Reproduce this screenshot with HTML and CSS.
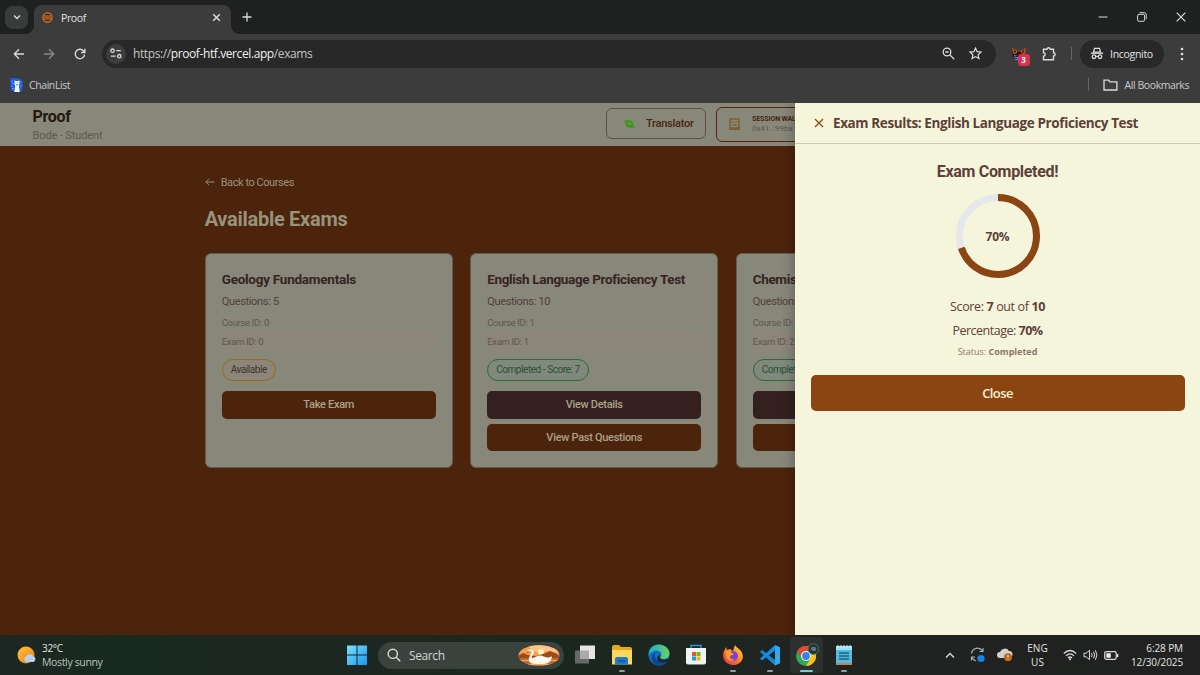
FILE: index.html
```html
<!DOCTYPE html>
<html lang="en">
<head>
<meta charset="utf-8">
<title>Proof</title>
<link rel="stylesheet" href="styles.css">
</head>
<body>
<div class="tabstrip">
  <div class="tab-search"><svg width="10" height="10" viewBox="0 0 10 10"><path d="M2 3.5 5 6.5 8 3.5" class="ln w15"/></svg></div>
  <div class="tab">
    <svg width="11" height="11" viewBox="0 0 11 11"><circle cx="5.5" cy="5.5" r="4.6" fill="#4b2a12" stroke="#d87a2c" stroke-width="1.1"/><path d="M1 4h9M1 7h9" stroke="#d87a2c"/><path d="M2 5.500h7" stroke="#a85c22"/></svg>
    <span class="tab-title">Proof</span>
    <svg class="tab-close" width="9" height="9" viewBox="0 0 9 9"><path d="M1.2 1.2 7.8 7.8M7.8 1.2 1.2 7.8" class="ln w15"/></svg>
  </div>
  <svg class="new-tab" width="10" height="10" viewBox="0 0 10 10"><path d="M5 .5v9M.5 5h9" class="ln w13"/></svg>
  <div class="win-controls">
    <svg width="10" height="10" viewBox="0 0 10 10"><path d="M.5 5h9" class="ln w1"/></svg>
    <svg width="10" height="10" viewBox="0 0 10 10"><rect x=".6" y="2.3" width="7" height="7" rx="1.5" class="ln w1"/><path d="M2.5.7h4.7a2 2 0 0 1 2 2v4.6" class="ln w1"/></svg>
    <svg width="10" height="10" viewBox="0 0 10 10"><path d="M.7.7l8.6 8.6M9.3.7.7 9.3" class="ln w12"/></svg>
  </div>
</div>

<div class="toolbar">
  <div class="nav">
    <svg width="12" height="12" viewBox="0 0 12 12"><path d="M11 6H1.5M6 1.3 1.3 6 6 10.7" class="ln w13"/></svg>
    <svg class="dim" width="12" height="12" viewBox="0 0 12 12"><path d="M1 6h9.500M6 1.300 10.700 6 6 10.700" class="ln w13"/></svg>
    <svg width="12" height="12" viewBox="0 0 12 12"><path d="M10.600 6.600A4.700 4.700 0 1 1 9.400 2.800L10.700 4.100M10.800.8v3.700H7.100" class="ln w14"/></svg>
  </div>
  <div class="omnibox">
    <span class="site-info"><svg width="12" height="11" viewBox="0 0 12 11"><circle cx="2.500" cy="2.700" r="1.700" class="ln w13"/><path d="M6.300 2.700h4.500M1 8.200h4.500" class="ln w13"/><circle cx="9.300" cy="8.200" r="1.700" class="ln w13"/></svg></span>
    <span class="url">https://<b>proof-htf.vercel.app</b>/exams</span>
    <svg class="zoomed" width="13" height="13" viewBox="0 0 13 13"><circle cx="5" cy="5" r="3.800" class="ln w13"/><path d="M3.300 5h3.400M7.900 7.900l4.300 4.300" class="ln w13"/></svg>
    <svg width="13" height="13" viewBox="0 0 13 13"><path d="M6.500 1.100 8.100 4.700 12 5.100 9.100 7.700 9.900 11.600 6.500 9.600 3.100 11.600 3.900 7.700 1 5.100 4.900 4.700Z" class="ln w12"/></svg>
  </div>
  <div class="extension">
    <svg width="16" height="14" viewBox="0 0 16 14"><path d="M1 1 6 3.500h4L15 1l-.8 5-.7 5-3 2H5.500L2 11Z" fill="#261718"/><path d="M1 .7 6 3.400h4L15 .7 14.300 6l-1.800 2-2-2H6L4 7.500 2 6Z" fill="#c4512a"/><path d="M2.500 2.500 5 4.500 4 6.500ZM13.500 2.500 11 4.500l1 2ZM6 4.500h4v2H6Z" fill="#1a1414"/><path d="M3 8l4 1v4H4Z" fill="#6c7fda"/><path d="M4 9.500h3M4 11.500h2" stroke="#1b1b34"/></svg>
    <span class="ext-badge">3</span>
  </div>
  <svg class="puzzle" width="14" height="15" viewBox="0 0 14 15"><path d="M1.500 3.300H5a1.600 1.600 0 1 1 3.200 0h3.300v3.500a1.600 1.600 0 1 1 0 3.200v3.700H1.500v-3.500a1.700 1.700 0 0 0 0-3.400Z" class="ln w14"/></svg>
  <i class="divider"></i>
  <div class="incognito">
    <svg width="14" height="13" viewBox="0 0 14 13"><path d="M4.500 1.400h5l1 3.800h-7Z" class="ln w13"/><path d="M.8 6.200h12.400" class="ln w13"/><circle cx="4" cy="9.700" r="1.800" class="ln w13"/><circle cx="10" cy="9.700" r="1.800" class="ln w13"/><path d="M5.800 9.400h2.400" class="ln w12"/></svg>
    <span>Incognito</span>
  </div>
  <svg class="kebab" width="4" height="14" viewBox="0 0 4 14"><g fill="#ddd"><circle cx="2" cy="2" r="1.300"/><circle cx="2" cy="7" r="1.300"/><circle cx="2" cy="12" r="1.300"/></g></svg>
</div>

<div class="bookmarks">
  <svg width="13" height="14" viewBox="0 0 13 14"><path d="M0 0h7l4 1 2 5-1 7H1Z" fill="#1d5bd8"/><path d="M1 3h2M2 5.500h2M1 8h2M2 10.500h2M10 4h2M10 8h2" stroke="#5b99ff"/><path d="M4.500 2l1 1h3l1-1v4.500l-.6 1.500 1 6H4.200l1-6-.7-1.500Z" fill="#e9f4ff"/><path d="M6.300 6h1.500L7 8Z" fill="#1d5bd8"/></svg>
  <span>ChainList</span>
  <i class="divider push"></i>
  <svg width="15" height="12" viewBox="0 0 15 12"><path d="M1 1.200h4.500L7 2.800h6.900v8.200H1Z" class="ln w13"/></svg>
  <span class="all">All Bookmarks</span>
</div>

<div class="page">
  <header class="app-header">
    <div class="brand"><div class="brand-name">Proof</div><div class="brand-user">Bode - Student</div></div>
    <div class="translator">
      <svg width="11" height="10" viewBox="0 0 11 10"><path d="M0 1.500 4.500.8l4 1.700L9.500 6l1.500 2.700-5 .3L2 7.500 1.400 4Z" fill="#40951a"/><path d="M3.800 3.700c1.600-.8 3.600.5 3.500 1.900-1.600.8-3.600-.5-3.500-1.900Z" fill="#87877a"/></svg>
      <span>Translator</span>
    </div>
    <div class="wallet">
      <svg width="11" height="12" viewBox="0 0 11 12"><rect x="1" y="1" width="9" height="9" fill="none" stroke="#765314" stroke-width="1.100"/><path d="M3 4h1.700M6.300 4H8M3.300 7h4.400M0 11.300h11" stroke="#765314" fill="none"/></svg>
      <div><div class="wallet-label">SESSION WALLET</div><div class="wallet-id">0x41...99ba</div></div>
    </div>
  </header>

  <main class="content">
    <div class="back"><svg width="10" height="8" viewBox="0 0 10 8"><path d="M9.500 4H.8M4 .8.800 4 4 7.200" fill="none" stroke="#99927c"/></svg><span>Back to Courses</span></div>
    <h1>Available Exams</h1>
    <div class="cards">
      <section class="card">
        <h2 class="short">Geology Fundamentals</h2>
        <p class="questions">Questions: 5</p>
        <p class="meta">Course ID: 0</p>
        <p class="meta exam">Exam ID: 0</p>
        <span class="badge open">Available</span>
        <div class="actions"><div class="btn brown">Take Exam</div></div>
      </section>
      <section class="card">
        <h2>English Language Proficiency Test</h2>
        <p class="questions">Questions: 10</p>
        <p class="meta">Course ID: 1</p>
        <p class="meta exam">Exam ID: 1</p>
        <span class="badge done">Completed - Score: 7</span>
        <div class="actions"><div class="btn dark">View Details</div><div class="btn brown">View Past Questions</div></div>
      </section>
      <section class="card">
        <h2>Chemistry Basics</h2>
        <p class="questions">Questions: 10</p>
        <p class="meta">Course ID: 2</p>
        <p class="meta exam">Exam ID: 2</p>
        <span class="badge done">Completed - Score: 7</span>
        <div class="actions"><div class="btn dark"></div><div class="btn brown"></div></div>
      </section>
    </div>
  </main>

  <aside class="drawer">
    <div class="drawer-head">
      <svg width="10" height="10" viewBox="0 0 10 10"><path d="M1 1l8 8M9 1 1 9" fill="none" stroke="#8b4513" stroke-width="1.150"/></svg>
      <span>Exam Results: English Language Proficiency Test</span>
    </div>
    <div class="drawer-body">
      <div class="completed">Exam Completed!</div>
      <div class="ring">
        <svg width="84" height="84" viewBox="0 0 84 84"><circle cx="42" cy="42" r="38.500" fill="none" stroke="#e5e7eb" stroke-width="7"/><circle cx="42" cy="42" r="38.500" fill="none" stroke="#8b4513" stroke-width="7" pathLength="100" stroke-dasharray="70 30" transform="rotate(-90 42 42)"/></svg>
        <span class="ring-value">70%</span>
      </div>
      <p class="result score">Score: <b>7</b> out of <b>10</b></p>
      <p class="result percentage">Percentage: <b>70%</b></p>
      <p class="status">Status: <b>Completed</b></p>
      <div class="close-btn"><span>Close</span></div>
    </div>
  </aside>
</div>

<footer class="taskbar">
  <div class="weather">
    <svg width="20" height="19" viewBox="0 0 20 19"><defs><linearGradient id="sun" x2="1" y2="1"><stop stop-color="#ffc53b"/><stop offset="1" stop-color="#ee7b12"/></linearGradient></defs><circle cx="9" cy="9" r="8.500" fill="url(#sun)"/><path d="M9 16a3 3 0 0 1 .3-5.500 4 4 0 0 1 7-.2A3 3 0 0 1 16.500 16Z" fill="#b9d0f3"/></svg>
    <div><div class="temp">32°C</div><div class="cond">Mostly sunny</div></div>
  </div>
  <svg class="start" width="20" height="20" viewBox="0 0 20 20"><defs><linearGradient id="win" x2="1" y2="1"><stop stop-color="#7fe0ff"/><stop offset="1" stop-color="#1597ee"/></linearGradient></defs><path d="M0 .5h9.500v9H0ZM10.500.5H20v9h-9.500ZM0 10.500h9.500V20H0ZM10.500 10.500H20V20h-9.500Z" fill="url(#win)"/></svg>
  <div class="search">
    <svg width="14" height="14" viewBox="0 0 14 14"><circle cx="5.800" cy="5.800" r="4.600" class="ln w14"/><path d="M9.200 9.200l4 4" class="ln w15"/></svg>
    <span>Search</span>
    <svg class="swan" width="42" height="21" viewBox="0 0 42 21"><defs><clipPath id="oval"><ellipse cx="21" cy="10.500" rx="20.500" ry="10.200"/></clipPath></defs><g clip-path="url(#oval)"><path fill="#f3a14f" d="M0 0h42v21H0z"/><path d="M8 0h34v8L30 6 18 7Z" fill="#ffc38a"/><circle cx="23" cy="7" r="3" fill="#fff0b5"/><path d="M0 11 5 8l5 2 8 1 7-2 7-3 5 2 5 3v3H0Z" fill="#9c4a1c"/><path d="M0 13h42v8H0Z" fill="#c06a30"/><path d="M3 15.500h9M32 15.500h8M7 19.500h28" stroke="#f3aa68"/></g><path d="M9 7.200C9.500 3.500 15 3 15.800 6.500c.5 2.700-2.600 4.500-2 6.300 2.200.6 4.500-2.300 8.700-2.300 2.500 0 4 1.800 6.500 2 2 .2 3.500-.7 5-1-.5 4.500-3.500 7.500-8.500 7.500H17c-5.500 0-7.200-3.500-5.700-7 1-2.300 2.900-4 2.200-5.500-.7-1.300-2.500-1-3 .5Z" fill="#fff7ec"/><path d="M10.600 6 8 8l2.500-.5Z" fill="#542a1a"/></svg>
  </div>
  <div class="apps">
    <div class="app"><svg width="22" height="22" viewBox="0 0 22 22"><path d="M1 6.500h14v13H1Z" fill="#66696a"/><path d="M6 1.500h15v13.500H6Z" fill="#e5e5e5"/><path d="M6 6.500h9V15H6Z" fill="#aaa"/></svg></div>
    <div class="app"><svg width="22" height="22" viewBox="0 0 22 22"><path d="M1 3q0-2 2-2h5l2 2h9q2 0 2 2v14H1Z" fill="#e5a817"/><path d="M1 6h20v14.500H1Z" fill="#ffd75b"/><path d="M4 15q0-2 2-2h9q2 0 2 2v5.500H4Z" fill="#1f78c8"/><path d="M7 17h7" stroke="#1054a0" stroke-width="1.500"/></svg><i></i></div>
    <div class="app"><svg width="22" height="22" viewBox="0 0 22 22"><defs><linearGradient id="edge" x2="1"><stop stop-color="#1eaadd"/><stop offset="1" stop-color="#69d35c"/></linearGradient></defs><circle cx="11" cy="11" r="10.500" fill="#126fc0"/><path d="M.6 10C1 4 5.500.5 11 .5S21.500 5 21.500 9s-3 6-6 6-4-1.500-2.600-3C15 8 10 5.500 6 7 3 8 1 10 .6 12Z" fill="url(#edge)"/><path d="M8 8c-4 5 1 11 8 9.500 2 0 3-1 4-2-2 4-6 6-10 6C5 21 2 15 5 10Z" fill="#0b4796"/><path d="M13 11c-3 3 0 6 7.500 3.500l1 1-3 2.500c-3 1-6 .7-8-.7-2.500-2-1.500-6 2.500-6.300Z" fill="#1b2a2c"/></svg></div>
    <div class="app"><svg width="22" height="22" viewBox="0 0 22 22"><path d="M6 5V1.500h10V5" fill="none" stroke="#2999d6" stroke-width="1.300"/><path d="M1 4h20v14.500q0 2-2 2H3q-2 0-2-2Z" fill="#f0f2f3"/><path fill="#ef5126" d="M7 8h4v4H7z"/><path fill="#76b719" d="M11.500 8h4v4h-4z"/><path fill="#159fe8" d="M7 12.500h4v4H7z"/><path fill="#f8b50b" d="M11.500 12.500h4v4h-4z"/></svg></div>
    <div class="app"><svg width="22" height="22" viewBox="0 0 22 22"><defs><linearGradient id="fox" x1="1" y1="0" x2="0" y2="1"><stop stop-color="#ffe13d"/><stop offset=".5" stop-color="#ff7e25"/><stop offset="1" stop-color="#ed225f"/></linearGradient></defs><path d="M13 1c1 2 3 3 4 4l2 2c5 8-1 14-8 14S-1 14 2 7l2-4 1 3 3-1 3 2c1-2 1-4 2-6Z" fill="url(#fox)"/><circle cx="11" cy="12" r="5" fill="#7c42d3"/><path d="M3 7c4-1 5 0 7 2l2 .8c-1.500 1.700-3.500 1.200-4 2.700s1.500 3.500 4.500 2.500c-2 3-7 2-8-1.500Z" fill="#ff9c21"/></svg><i></i></div>
    <div class="app"><svg width="22" height="22" viewBox="0 0 22 22"><path d="M16 1l5 2.300v16L16 21.500Z" fill="#35a9ef"/><path d="M1 8l2-2 13 10v5.500L1 8Z" fill="#1688d0"/><path d="M1 14.500 16 1v5.500L3 16.500Z" fill="#168be0"/></svg><i></i></div>
    <div class="app active"><svg width="24" height="24" viewBox="0 0 24 24"><circle cx="11" cy="13" r="10" fill="#31a852"/><path d="M2.300 8A10 10 0 0 1 19.700 8H11a5 5 0 0 0-4.500 7.200Z" fill="#e84535"/><path d="M19.700 8A10 10 0 0 1 11 23l4.400-7.500A5 5 0 0 0 11 8Z" fill="#fbc116"/><circle cx="11" cy="13" r="5" fill="#fff"/><circle cx="11" cy="13" r="3.900" fill="#387fe8"/><circle cx="18.500" cy="6" r="5.300" fill="#26322f" stroke="#2f7971"/><path d="M16.500 4h4v1h1l-1 3h-3l-2-2Z" fill="#66736f"/></svg><i></i></div>
    <div class="app"><svg width="22" height="22" viewBox="0 0 22 22"><path d="M3 2h16v19H3Z" fill="#58b9db"/><path d="M3 2h16v4H3Z" fill="#95e2f1"/><path d="M5 1v3M8 1v3M11 1v3M14 1v3M17 1v3" stroke="#d9edf2"/><path d="M6 9h10M6 12h10M6 15h10" stroke="#176181" stroke-width="1.300"/><path d="M3 19h16v2H3Z" fill="#b6865a"/></svg><i></i></div>
  </div>
  <div class="tray">
    <svg width="10" height="7" viewBox="0 0 10 7"><path d="M1 5.500 5 1.500 9 5.500" class="ln w14"/></svg>
    <svg class="sync" width="16" height="16" viewBox="0 0 16 16"><path d="M1.500 6.500A6 6 0 0 1 12.500 4M13 1v3.500H9.500M1.500 13.500v-3.500H5M2 10.500a6 6 0 0 0 4 3.500" fill="none" stroke="#aab0b2" stroke-width="1.200"/><circle cx="11" cy="11.500" r="3.600" fill="#1684e8"/></svg>
    <svg class="cloud" width="16" height="14" viewBox="0 0 16 14"><path d="M3 10a3 3 0 0 1 0-6 5 5 0 0 1 9-1 3 3 0 0 1 1 6L9 10Z" fill="#d5d1cb"/><circle cx="11" cy="9.200" r="4" fill="#b9691b"/><path d="M11 7v2.700M11 10.800v.8" stroke="#fff2d5"/></svg>
    <div class="lang"><span>ENG</span><span>US</span></div>
    <svg class="wifi" width="14" height="12" viewBox="0 0 14 12"><path d="M.8 4.500q6.200-6 12.400 0M3 6.800q4-4 8 0M5 9q2-2 4 0" class="ln w12"/><circle cx="7" cy="10.300" r="1" fill="#e8e8e8"/></svg>
    <svg class="vol" width="15" height="12" viewBox="0 0 15 12"><path d="M1 4.200h2.200L6.500 1.300v9.400L3.200 7.800H1ZM8.500 4q1.300 2 0 4M10.500 2.600q2.300 3.400 0 6.800M12.400 1.200q3 4.800 0 9.600" class="ln w1"/></svg>
    <svg class="batt" width="15" height="9" viewBox="0 0 15 9"><rect x=".7" y=".7" width="11.500" height="7.600" rx="1.500" class="ln w12"/><path d="M2.300 2.300h4.500v4.400H2.300ZM13 3h1.300v3H13Z" fill="#eee"/></svg>
    <div class="clock"><span class="time">6:28 PM</span><span class="date">12/30/2025</span></div>
  </div>
</footer>
</body>
</html>
```

FILE: styles.css
```css
* { box-sizing: border-box; }
body { margin: 0; width: 1200px; height: 675px; overflow: hidden; display: flex; flex-direction: column; font-family: "Open Sans", "Noto Sans", sans-serif; background: #3c3c3c; color: #e3e3e3; }
svg { display: block; flex: none; }
span { white-space: nowrap; }
p, h1, h2 { margin: 0; white-space: nowrap; }
.ln { fill: none; stroke: #dadada; }
.w1 { stroke-width: 1; }
.w12 { stroke-width: 1.2; }
.w13 { stroke-width: 1.3; }
.w14 { stroke-width: 1.4; }
.w15 { stroke-width: 1.5; }

/* browser window */
.tabstrip { height: 34px; flex: none; display: flex; align-items: center; background: #1f2120; padding-left: 5px; }
.tab-search { width: 23px; height: 23px; border-radius: 8px; background: #3a3b3b; display: grid; place-items: center; }
.tab { align-self: flex-end; width: 196.5px; height: 29px; margin-left: 6px; padding: 0 9.500px 4px 8px; border-radius: 8px 8px 0 0; background: #3c3c3c; display: flex; align-items: center; position: relative; }
.tab::before, .tab::after { content: ""; position: absolute; bottom: 0; width: 8px; height: 8px; }
.tab::before { left: -8px; background: radial-gradient(circle at 0 0, #1f2120 7.5px, #3c3c3c 8px); }
.tab::after { right: -8px; background: radial-gradient(circle at 100% 0, #1f2120 7.5px, #3c3c3c 8px); }
.tab-title { font-size: 10.5px; margin-left: 8px; letter-spacing: -.4px; }
.tab-close { margin-left: auto; }
.new-tab { margin-left: 11.5px; }
.win-controls { margin-left: auto; display: flex; gap: 29px; padding-right: 14px; }
.toolbar { height: 39px; flex: none; display: flex; align-items: center; background: #3c3c3c; padding-left: 12.5px; }
.nav { display: flex; gap: 18.5px; width: 89.5px; }
.dim { opacity: .5; }
.omnibox { width: 894px; height: 28px; border-radius: 14px; background: #282828; display: flex; align-items: center; padding: 0 14px 0 4px; }
.site-info { width: 20px; height: 20px; border-radius: 50%; background: #3d3d3d; display: grid; place-items: center; }
.url { margin-left: 7px; font-size: 12px; color: #c4c4c4; letter-spacing: -.4px; }
.url b { font-weight: 400; color: #f0f0f0; }
.zoomed { margin-left: auto; margin-right: 14px; }
.extension { position: relative; margin-left: 14.5px; width: 16px; height: 14px; }
.ext-badge { position: absolute; left: 7px; top: 7px; width: 12px; height: 12px; border-radius: 3px; background: #d9304f; font-size: 8px; font-weight: 700; line-height: 12px; text-align: center; color: #fff; }
.puzzle { margin-left: 15px; }
.divider { width: 1px; height: 13px; background: #656565; }
.toolbar .divider { margin-left: 15px; }
.incognito { width: 84px; height: 28px; margin-left: 8px; border-radius: 14px; background: #282828; display: flex; align-items: center; padding-left: 10px; gap: 6.5px; font-size: 10.5px; letter-spacing: -.3px; }
.kebab { margin-left: 16.5px; }
.bookmarks { height: 29.5px; flex: none; display: flex; align-items: center; background: #3c3c3c; padding: 0 11px 6px 10px; font-size: 10.5px; color: #c9c9c9; letter-spacing: -.42px; }
.bookmarks span { margin-left: 6px; }
.push { margin-left: auto; margin-right: 14px; }

/* application */
.page { flex: 1; position: relative; overflow: hidden; background: #4b240b; font-family: Roboto, sans-serif; color: #59483f; }
.app-header { height: 43.5px; background: #87877a; display: flex; align-items: center; padding-left: 32.5px; }
.brand { width: 573px; padding-top: 4px; }
.brand-name { font-size: 16px; line-height: 19px; font-weight: 700; color: #241811; letter-spacing: -.3px; }
.brand-user { font-size: 11px; line-height: 19px; color: #5b5b50; letter-spacing: -.12px; }
.translator { width: 100px; height: 31px; margin-top: -1px; border: 1px solid #5b5248; border-radius: 6px; display: flex; align-items: center; padding-left: 17.5px; gap: 11px; font-size: 11px; font-weight: 500; color: #4b240b; letter-spacing: -.25px; }
.wallet { margin-left: 10.500px; width: 120px; height: 35px; border: 1.5px solid #56210f; border-radius: 6px; display: flex; align-items: center; padding-left: 12px; gap: 12px; white-space: nowrap; overflow: hidden; }
.wallet-label { font-size: 7px; line-height: 9px; font-weight: 700; color: #4b240b; letter-spacing: -.1px; }
.wallet-id { font-size: 8px; line-height: 10px; color: #5d5850; letter-spacing: -.1px; }
.content { padding-left: 204.7px; }
.back { display: flex; align-items: center; gap: 6px; padding-top: 28px; height: 44px; font-size: 11px; color: #99927c; letter-spacing: -.44px; }
h1 { font-size: 20px; line-height: 28px; font-weight: 700; color: #99927c; margin-top: 15px; letter-spacing: -.28px; }
.cards { display: grid; grid-template-columns: repeat(3, 248px); column-gap: 17.5px; margin-top: 20px; }
.card { height: 215px; padding: 16px; border: 1px solid #625c50; border-radius: 6px; background: #87877a; display: flex; flex-direction: column; overflow: hidden; }
h2 { font-size: 13.5px; line-height: 18px; font-weight: 700; color: #37231f; letter-spacing: -.34px; }
h2.short { letter-spacing: -.25px; }
.questions { font-size: 11px; line-height: 16px; margin-top: 6px; color: #51413a; letter-spacing: -.33px; }
.meta { font-size: 9.500px; line-height: 18px; margin-top: 4px; color: #61574e; letter-spacing: -.32px; }
.meta.exam { line-height: 19px; margin-top: 0; background: #8c857a; border-radius: 2px; }
.badge { align-self: flex-start; margin-top: 8px; height: 22px; line-height: 19px; padding: 0 8px; border: 1.5px solid #9b6a12; border-radius: 11px; font-size: 10px; color: #45342d; letter-spacing: -.44px; }
.badge.open { background: #8b8679; }
.badge.done { border-color: #2b6b3c; color: #275337; background: #80897b; }
.actions { display: grid; gap: 5px; margin-top: 10px; }
.btn { height: 27.5px; border-radius: 5px; display: grid; place-items: center; font-size: 11px; font-weight: 500; color: #aaa18b; letter-spacing: -.3px; }
.btn.brown { background: #4c240b; }
.btn.dark { background: #34211f; }

/* results drawer overlays the exam list */
.drawer { position: absolute; top: 0; right: 0; bottom: 0; width: 405px; background: #f5f5dc; box-shadow: -3px 0 10px rgba(0,0,0,.22); color: #5d4037; font-family: "Open Sans", "Noto Sans", sans-serif; }
.drawer-head { height: 41.5px; border-bottom: 1px solid #cfc9b1; padding-left: 19px; display: flex; align-items: center; gap: 9px; font-size: 13.5px; font-weight: 700; letter-spacing: -.39px; }
.drawer-body { padding: 17px 15.5px; display: flex; flex-direction: column; align-items: center; }
.completed { font-family: Roboto, sans-serif; font-size: 16px; font-weight: 700; line-height: 22px; letter-spacing: -.32px; }
.ring { display: grid; place-items: center; margin-top: 11px; }
.ring > * { grid-area: 1 / 1; }
.ring-value { font-size: 12px; font-weight: 700; letter-spacing: -.2px; }
.result { font-size: 12.5px; line-height: 20px; letter-spacing: -.37px; }
.score { margin-top: 19px; }
.percentage { margin-top: 4px; letter-spacing: -.5px; }
.status { font-size: 9px; line-height: 14px; margin-top: 4px; color: #8a7767; }
.close-btn { align-self: stretch; height: 35.5px; margin-top: 16px; border-radius: 5px; background: #8b4513; color: #f8efd2; display: grid; place-items: center; font-size: 13px; font-weight: 600; letter-spacing: -.6px; }

/* desktop taskbar */
.taskbar { flex: none; height: 40px; display: flex; align-items: center; background: linear-gradient(90deg, #1e2723 0, #172b20 120px, #1c2721 240px, #1a271e 560px, #202421 800px, #202120 1200px); font-size: 10.5px; }
.weather { width: 347px; padding-left: 17px; display: flex; align-items: center; gap: 5px; line-height: 14px; }
.temp { font-size: 10px; letter-spacing: -.3px; }
.cond { color: #bdc3be; letter-spacing: -.35px; }
.search { width: 186px; height: 27px; margin-left: 11px; border-radius: 14px; background: #3a423d; display: flex; align-items: center; padding-left: 9px; font-size: 12px; color: #d3d8d4; }
.search span { margin-left: 8px; letter-spacing: -.4px; }
.swan { margin-left: auto; margin-right: 4px; }
.apps { display: flex; margin-left: 2px; }
.app { width: 37px; height: 36px; display: grid; place-items: center; position: relative; padding-bottom: 1px; }
.app i { position: absolute; bottom: 1px; width: 6px; height: 2px; border-radius: 1px; background: #9a9d9b; }
.app.active { background: #2e302f; border-radius: 4px; width: 33px; margin: 0 2px; }
.app.active i { width: 13px; background: #76ccdc; }
.tray { margin-left: auto; display: flex; align-items: center; padding-right: 17px; line-height: 14px; }
.sync { margin-left: 14.5px; }
.cloud { margin-left: 11px; }
.lang { width: 24px; margin-left: 13px; display: grid; justify-items: center; font-size: 10px; }
.wifi { margin-left: 13px; }
.vol { margin-left: 6px; }
.batt { margin-left: 6.500px; }
.clock { width: 64px; display: grid; justify-items: end; font-size: 10px; letter-spacing: -.1px; }
```
